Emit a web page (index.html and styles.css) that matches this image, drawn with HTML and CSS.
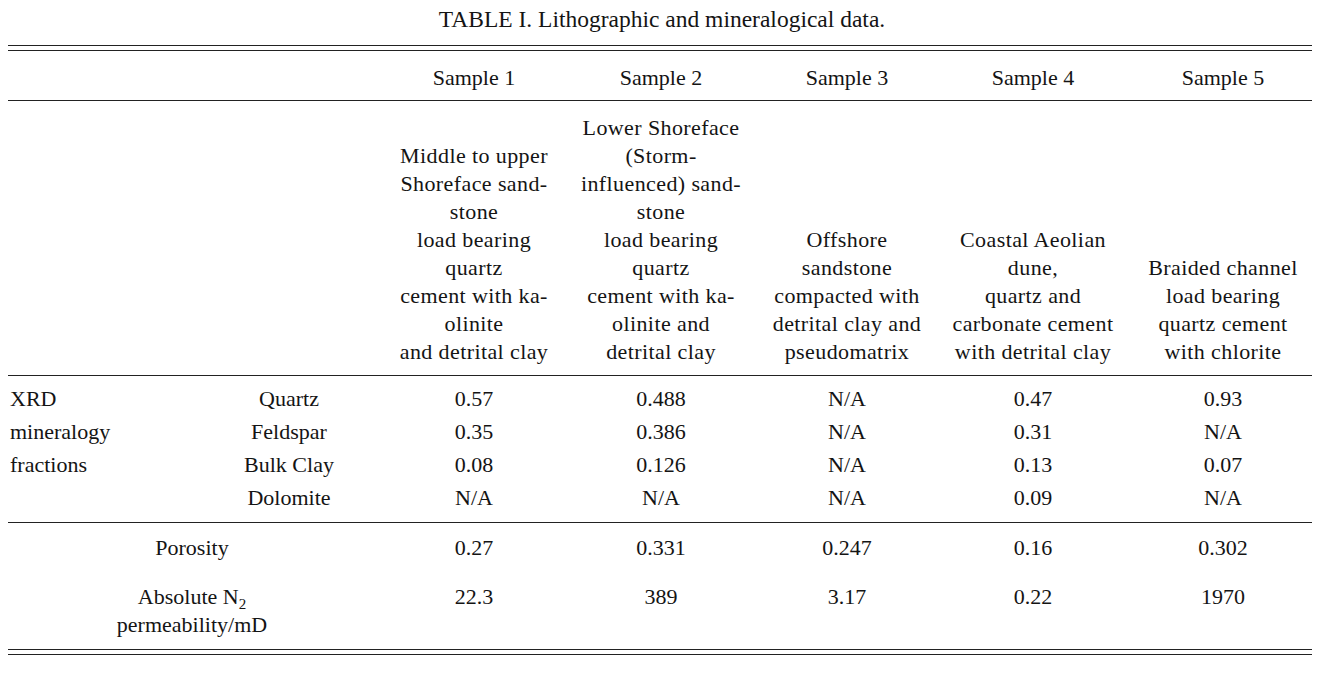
FILE: index.html
```html
<!DOCTYPE html>
<html>
<head>
<meta charset="utf-8">
<link rel="stylesheet" href="styles.css">
</head>
<body>
<div class="caption">TABLE I. Lithographic and mineralogical data.</div>
<div class="table-wrap">
<table class="data">
<colgroup>
<col class="c-a"><col class="c-b"><col class="c-s1"><col class="c-s2"><col class="c-s3"><col class="c-s4"><col class="c-s5">
</colgroup>
<tbody>
<tr class="head">
<td></td><td></td>
<td>Sample 1</td><td>Sample 2</td><td>Sample 3</td><td>Sample 4</td><td class="s5">Sample 5</td>
</tr>
<tr class="desc">
<td></td><td></td>
<td>Middle to upper<br>Shoreface sand-<br>stone<br>load bearing<br>quartz<br>cement with ka-<br>olinite<br>and detrital clay</td>
<td>Lower Shoreface<br>(Storm-<br>influenced) sand-<br>stone<br>load bearing<br>quartz<br>cement with ka-<br>olinite and<br>detrital clay</td>
<td>Offshore<br>sandstone<br>compacted with<br>detrital clay and<br>pseudomatrix</td>
<td>Coastal Aeolian<br>dune,<br>quartz and<br>carbonate cement<br>with detrital clay</td>
<td class="s5">Braided channel<br>load bearing<br>quartz cement<br>with chlorite</td>
</tr>
<tr class="xrd first">
<td class="left">XRD</td><td>Quartz</td>
<td>0.57</td><td>0.488</td><td>N/A</td><td>0.47</td><td class="s5">0.93</td>
</tr>
<tr class="xrd">
<td class="left">mineralogy</td><td>Feldspar</td>
<td>0.35</td><td>0.386</td><td>N/A</td><td>0.31</td><td class="s5">N/A</td>
</tr>
<tr class="xrd">
<td class="left">fractions</td><td>Bulk Clay</td>
<td>0.08</td><td>0.126</td><td>N/A</td><td>0.13</td><td class="s5">0.07</td>
</tr>
<tr class="xrd last">
<td class="left"></td><td>Dolomite</td>
<td>N/A</td><td>N/A</td><td>N/A</td><td>0.09</td><td class="s5">N/A</td>
</tr>
<tr class="prop poro">
<td colspan="2">Porosity</td>
<td>0.27</td><td>0.331</td><td>0.247</td><td>0.16</td><td class="s5">0.302</td>
</tr>
<tr class="prop perm">
<td colspan="2">Absolute N<span class="sub">2</span><br>permeability/mD</td>
<td>22.3</td><td>389</td><td>3.17</td><td>0.22</td><td class="s5">1970</td>
</tr>
</tbody>
</table>
</div>
</body>
</html>
```
FILE: styles.css
```css
html, body {
  margin: 0;
  padding: 0;
  background: #fff;
}
body {
  padding: 0 15px 0 8px;
  font-family: "Liberation Serif", "Times New Roman", serif;
  font-size: 22px;
  color: #141414;
}
.caption {
  text-align: center;
  font-size: 23.5px;
  line-height: 28px;
  padding-top: 5px;
  height: 28px;
  margin-bottom: 12px;
  padding-left: 4px;
}
.table-wrap {
  border-top: 1px solid #222;
  border-bottom: 1px solid #222;
  padding: 4px 0;
}
table.data {
  width: 100%;
  border-collapse: collapse;
  table-layout: fixed;
  border-top: 1px solid #222;
  border-bottom: 1px solid #222;
}
.c-a { width: 194px; }
.c-b { width: 174px; }
.c-s1 { width: 196px; }
.c-s2 { width: 178px; }
.c-s3 { width: 194px; }
.c-s4 { width: 178px; }
.c-s5 { width: 190px; }
td {
  padding: 0;
  text-align: center;
  vertical-align: bottom;
  line-height: 28px;
  white-space: nowrap;
}
td.s5 { padding-left: 12px; }
td.left { text-align: left; padding-left: 2px; }
tr.head td {
  padding-top: 13px;
  padding-bottom: 8px;
  border-bottom: 1px solid #222;
}
tr.head td.s5, tr.desc td.s5 { padding-left: 12px; }
tr.desc td {
  padding-top: 13px;
  padding-bottom: 9px;
  letter-spacing: 0.4px;
  border-bottom: 1px solid #222;
}
tr.xrd td {
  line-height: 33px;
  vertical-align: top;
}
tr.xrd.first td { padding-top: 6px; }
tr.xrd.last td { padding-bottom: 8px; border-bottom: 1px solid #222; }
tr.prop td { vertical-align: top; }
tr.poro td { padding-top: 11px; padding-bottom: 10px; }
tr.perm td { padding-top: 11px; padding-bottom: 10px; }
.sub {
  font-size: 15px;
  position: relative;
  top: 5px;
  line-height: 0;
}
```
